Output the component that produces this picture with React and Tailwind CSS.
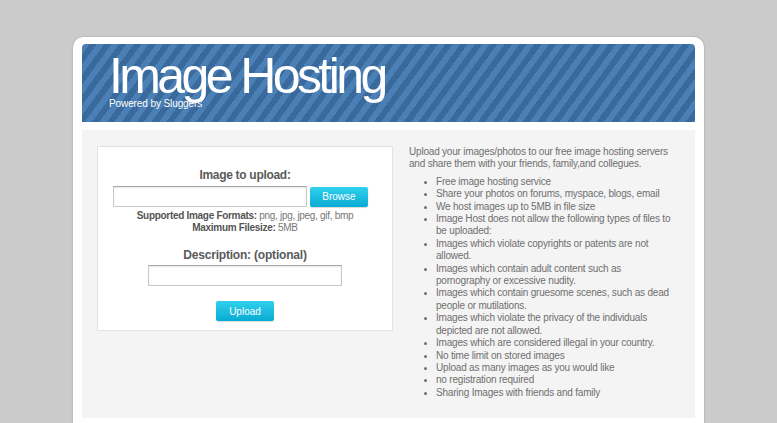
export default function App() {
  const items = [
    "Free image hosting service",
    "Share your photos on forums, myspace, blogs, email",
    "We host images up to 5MB in file size",
    "Image Host does not allow the following types of files to be uploaded:",
    "Images which violate copyrights or patents are not allowed.",
    "Images which contain adult content such as pornography or excessive nudity.",
    "Images which contain gruesome scenes, such as dead people or mutilations.",
    "Images which violate the privacy of the individuals depicted are not allowed.",
    "Images which are considered illegal in your country.",
    "No time limit on stored images",
    "Upload as many images as you would like",
    "no registration required",
    "Sharing Images with friends and family",
  ];

  return (
    <div className="min-h-screen overflow-hidden bg-[#cbcbcb] pt-[37px] font-['Liberation_Sans',Arial,sans-serif]">
      <div className="ml-[73px] w-[631px] rounded-t-[10px] bg-white px-[9px] pt-[7px] pb-[8px] shadow-[0_0_2px_rgba(0,0,0,0.25)]">
        <header className="h-[78px] rounded-t-[4px] bg-[#4a80b5] bg-[image:repeating-linear-gradient(126deg,#4a80b5_0px,#4a80b5_6px,#3a6a9b_6px,#3a6a9b_12px)] pl-[27px] pt-[9px] text-white">
          <h1 className="text-[50px] leading-[46px] tracking-[-3.6px]">Image Hosting</h1>
          <p className="mt-[-1px] text-[10px] leading-[12px] tracking-[-0.1px]">Powered by Sluggers</p>
        </header>

        <main className="mt-[8px] flex h-[288px] bg-[#f4f4f4] px-[15px] pt-[16px]">
          <div className="flex h-[185px] w-[296px] shrink-0 flex-col items-center border border-[#e3e3e3] bg-white pt-[20px]">
            <label className="text-[12px] font-bold leading-[16px] tracking-[-0.3px] text-[#5a5a5a]">Image to upload:</label>
            <div className="mt-[3px] flex items-center gap-[3px] self-start pl-[15px]">
              <input className="h-[21px] w-[194px] border border-[#c9c9c9] border-t-[#a8a8a8] bg-white shadow-[inset_0_1px_2px_rgba(0,0,0,0.1)] outline-none" />
              <button className="h-[20px] w-[58px] rounded-[2px] bg-gradient-to-b from-[#2fd0ee] to-[#05abd3] text-[10px] text-white shadow-[0_1px_1px_rgba(0,0,0,0.15)]">
                Browse
              </button>
            </div>
            <p className="mt-[3px] text-[10px] leading-[12px] tracking-[-0.3px] text-[#777]">
              <b className="text-[#555]">Supported Image Formats:</b> png, jpg, jpeg, gif, bmp
            </p>
            <p className="text-[10px] leading-[12px] tracking-[-0.3px] text-[#777]">
              <b className="text-[#555]">Maximum Filesize:</b> 5MB
            </p>
            <label className="mt-[13px] text-[12px] font-bold leading-[16px] tracking-[-0.2px] text-[#5a5a5a]">
              Description: (optional)
            </label>
            <input className="mt-[2px] h-[21px] w-[194px] border border-[#c9c9c9] border-t-[#a8a8a8] bg-white shadow-[inset_0_1px_2px_rgba(0,0,0,0.1)] outline-none" />
            <button className="mt-[15px] h-[20px] w-[58px] rounded-[2px] bg-gradient-to-b from-[#2fd0ee] to-[#05abd3] text-[10px] text-white shadow-[0_1px_1px_rgba(0,0,0,0.15)]">
              Upload
            </button>
          </div>

          <div className="ml-[16px] w-[262px] text-[10px] leading-[12.4px] tracking-[-0.2px] text-[#6f6f6f]">
            <p>
              Upload your images/photos to our free image hosting servers and share them with your friends, family,and collegues.
            </p>
            <ul className="mt-[5px] list-disc pl-[27px] marker:text-[9px]">
              {items.map((t) => (
                <li key={t}>{t}</li>
              ))}
            </ul>
          </div>
        </main>
      </div>
    </div>
  );
}
